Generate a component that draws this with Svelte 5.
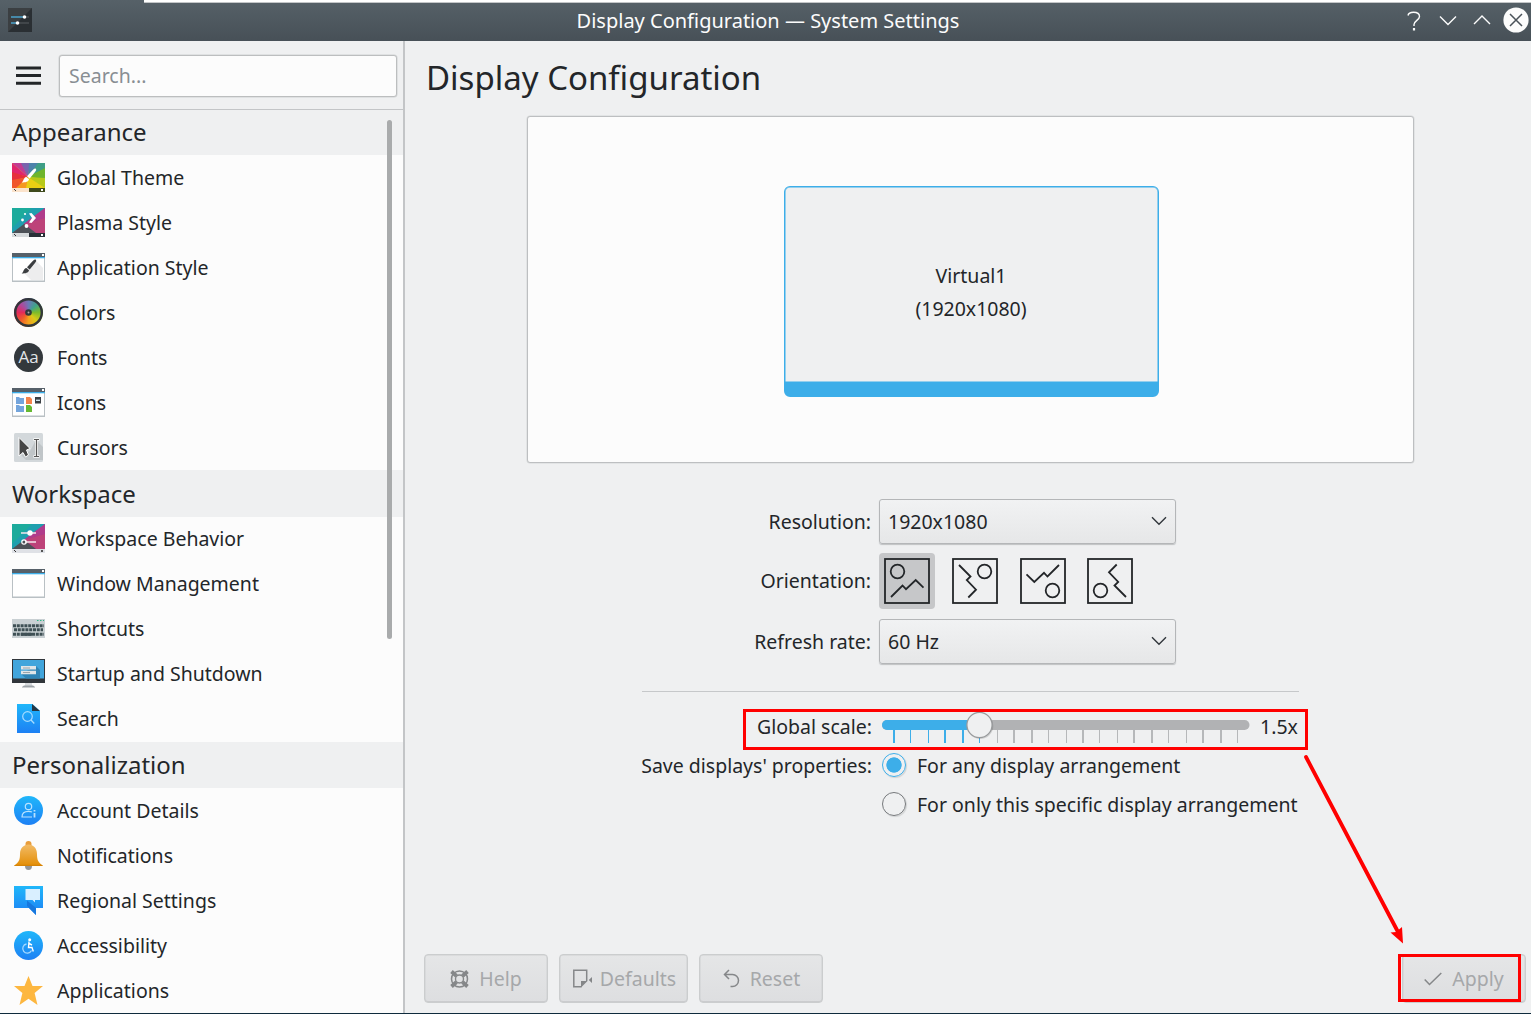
<script>
  const sections = [
    {
      title: 'Appearance',
      height: 'h45',
      items: [
        ['theme', 'Global Theme'],
        ['plasma', 'Plasma Style'],
        ['appstyle', 'Application Style'],
        ['colors', 'Colors'],
        ['fonts', 'Fonts'],
        ['icons', 'Icons'],
        ['cursors', 'Cursors']
      ]
    },
    {
      title: 'Workspace',
      height: 'h47',
      items: [
        ['behavior', 'Workspace Behavior'],
        ['window', 'Window Management'],
        ['keyboard', 'Shortcuts'],
        ['startup', 'Startup and Shutdown'],
        ['search', 'Search']
      ]
    },
    {
      title: 'Personalization',
      height: 'h46',
      items: [
        ['account', 'Account Details'],
        ['bell', 'Notifications'],
        ['regional', 'Regional Settings'],
        ['access', 'Accessibility'],
        ['star', 'Applications']
      ]
    }
  ];

  // Tick marks under the scale slider: [offset, width]
  const ticks = [
    [11, 2], [28, 1], [46, 1], [62, 2], [80, 2], [97, 1], [115, 1],
    [131, 2], [149, 2], [166, 1], [184, 1], [200, 2], [217, 1], [235, 1],
    [251, 2], [269, 2], [286, 1], [304, 1], [320, 2], [338, 2], [355, 1]
  ];

  const orientations = [0, 90, 180, 270];
  let orientation = $state(0);
  let arrangement = $state('any');
</script>

{#snippet chevron()}
  <svg class="chev" width="16" height="10" viewBox="0 0 16 10"><path d="M1 1.2L8 8.2L15 1.2" fill="none" stroke="#31363b" stroke-width="1.4" /></svg>
{/snippet}

{#snippet windowFrame()}
  <rect x="0" y="2" width="33" height="29" fill="#b9c0c4" />
  <rect x="1" y="7" width="31" height="22.5" fill="#fff" />
  <rect x="0" y="2" width="33" height="4" fill="#566069" />
  <rect x="0" y="6" width="33" height="1.3" fill="#3daee9" />
  <rect x="30" y="3" width="2" height="2" fill="#fff" />
{/snippet}

{#snippet brush(color)}
  <path d="M23.6 7.6C24.8 8.6 24 9.8 23 11L17.7 17.4L15 15.2L20.5 9.3C21.6 8 22.7 6.9 23.6 7.6Z" fill={color} />
  <path d="M14.4 15.9L17 18.2C16.6 20.8 13.5 21.4 9.6 21.5C11.8 20.2 11.2 16.4 14.4 15.9Z" fill={color} />
{/snippet}

{#snippet plasmaBack()}
  <rect x="0" y="2" width="33" height="29" fill="#1f9fae" />
  <path d="M0 2H20L0 22Z" fill="#1cab9c" />
  <path d="M33 2V27H23L11.500 18Z" fill="#a8418f" />
  <path d="M33 2V12L12 18Z" fill="#b03c8b" />
  <path d="M12 18L33 12V27H24Z" fill="#bd4379" />
  <path d="M0 27L12 18L24 27Z" fill="#4d5157" />
{/snippet}

{#snippet itemIcon(name)}
  <svg class="item-icon" width="33" height="33" viewBox="0 0 33 33">
    {#if name === 'theme'}
      <rect x="0" y="2" width="33" height="29" fill="#e9cf13" />
      <path d="M16 16L0 2V12Z" fill="#e1256e" />
      <path d="M16 16L0 2H10Z" fill="#c23c93" />
      <path d="M16 16L9 2H18Z" fill="#7a64ad" />
      <path d="M16 16L17 2H27Z" fill="#4d83ab" />
      <path d="M16 16L26 2H33V8Z" fill="#3f9e86" />
      <path d="M16 16L33 7V18Z" fill="#6fb52c" />
      <path d="M16 16L33 17V27Z" fill="#b7c91a" />
      <path d="M16 16L0 11V20Z" fill="#e62f3c" />
      <path d="M16 16L0 19V27H5Z" fill="#f0562b" />
      <path d="M16 16L4 27H14Z" fill="#f59820" />
      <rect x="0" y="27" width="17" height="4" fill="#fbe3cb" />
      <rect x="17" y="27" width="16" height="4" fill="#3e4a1c" />
      <rect x="29" y="28" width="2" height="2" fill="#fff" />
      <path d="M2 28L4 30" stroke="#444" stroke-width="1" />
      {@render brush('#fff')}
    {:else if name === 'plasma'}
      {@render plasmaBack()}
      <rect x="0" y="27" width="17" height="4" fill="#d5d9db" />
      <rect x="17" y="27" width="16" height="4" fill="#292f36" />
      <rect x="29" y="28" width="2" height="2" fill="#fff" />
      <path d="M2 28L4 30" stroke="#333" stroke-width="1" />
      <path d="M17 7.500L19.500 7L24 12L19.500 17L17 16.500L20 12Z" fill="#fff" />
      <circle cx="13" cy="8" r="1.1" fill="#fff" /><circle cx="10.500" cy="14" r="1.400" fill="#fff" /><circle cx="14.500" cy="20" r="1.900" fill="#fff" />
    {:else if name === 'behavior'}
      {@render plasmaBack()}
      <rect x="0" y="27" width="33" height="4" fill="#dfe1e6" />
      <path d="M2 28L4 30" stroke="#333" stroke-width="1" />
      <rect x="29" y="28" width="2" height="2" fill="#555" />
      <path d="M9 11H24M13 20H24" stroke="#f3e6ec" stroke-width="1.300" />
      <circle cx="18" cy="11" r="2.700" fill="#fff" />
      <circle cx="12" cy="20" r="2.200" fill="none" stroke="#fff" stroke-width="1.200" />
    {:else if name === 'appstyle'}
      {@render windowFrame()}
      <path d="M23.500 9L31 17V29H19L11 21Z" fill="#ededee" />
      <g class="shift">{@render brush('#3b3e41')}</g>
    {:else if name === 'window'}
      {@render windowFrame()}
    {:else if name === 'colors'}
      <foreignObject x="2" y="2" width="29" height="29"><div class="wheel"></div></foreignObject>
      <circle cx="16.500" cy="16.500" r="13.300" fill="none" stroke="#33373b" stroke-width="2.400" />
      <circle cx="16.500" cy="16.500" r="3.300" fill="#33373b" />
      <circle cx="16.500" cy="16.500" r="1" fill="#aaa" />
    {:else if name === 'fonts'}
      <circle cx="16.500" cy="16.500" r="14.500" fill="#33383c" />
      <text x="16.500" y="22" text-anchor="middle" class="aa">Aa</text>
    {:else if name === 'icons'}
      {@render windowFrame()}
      <path d="M4 11h3l1 1h4v6H4zM4 19h3l1 1h4v6H4z" fill="#74a5dc" />
      <path d="M14 11h4l2 2v5h-6z" fill="#f5834a" />
      <path d="M14 19h4l2 2v5h-6z" fill="#66b932" />
      <rect x="23" y="11" width="6" height="6.500" fill="#3b4045" />
      <path d="M24 14.300h4" stroke="#d7ecf5" stroke-width="1.300" />
    {:else if name === 'cursors'}
      <rect x="2" y="2" width="29" height="29" rx="1.500" fill="#d3d8db" />
      <path d="M9 24L14 29H31V16L24 9L18 20Z" fill="#c0c5c8" />
      <path d="M7 6.500L18 17.500L14.500 19L16.500 24L13.500 26L11 21.500L7 25Z" fill="#454545" stroke="#fff" stroke-width="1" />
      <path d="M21.500 8.500H27.500M24.500 8.500V25.500M21.500 25.500H27.500" stroke="#fff" stroke-width="2.600" />
      <path d="M22 8.500H27M24.500 8.500V25.500M22 25.500H27" stroke="#555" stroke-width="1.200" />
    {:else if name === 'keyboard'}
      <rect x="0" y="7" width="33" height="19" fill="#c9d0d3" />
      <path d="M25 8.500h1.500M28 8.500h1.500M31 8.500h1" stroke="#2fb587" stroke-width="1.200" />
      <path d="M1 13.700H32M2 17.800H31M1 22.300H32" stroke="#3f5055" stroke-width="3" stroke-dasharray="3 .8" />
      <path d="M9 22.300H20" stroke="#3f5055" stroke-width="3" />
    {:else if name === 'startup'}
      <path d="M13 24h7v5h-7z" fill="#d7dadd" /><path d="M10 30L12 28.500H21L23 30V30.500H10Z" fill="#9da3a8" />
      <rect x="0" y="2" width="33" height="24" fill="#31363b" />
      <rect x="1" y="3" width="31" height="18.500" fill="#41a5dc" />
      <path d="M24 9L28 13V21.500H14L9 17Z" fill="#2f84b6" />
      <path d="M9 9h15v3.600H9zM9 13.700h15v3.600H9z" fill="#dfe5e8" />
      <path d="M11 11h7M11 15.500h7" stroke="#9aa5ab" stroke-width="1" />
    {:else if name === 'search'}
      <path d="M5 2H20.500L28 9V31H5Z" fill="url(#blue)" />
      <path d="M20 2V9H28Z" fill="#273642" />
      <circle cx="15.500" cy="14.500" r="4.800" fill="none" stroke="#a8dcff" stroke-width="1.200" /><path d="M19 18L22.300 21.500" stroke="#a8dcff" stroke-width="1.300" />
    {:else if name === 'account'}
      <circle cx="16.500" cy="16.500" r="14.500" fill="url(#blue)" />
      <g fill="none" stroke="#b9e2ff" stroke-width="1.200">
        <circle cx="16.500" cy="12.500" r="3.200" />
        <path d="M20 23H10C10 18.500 13 17.300 16.500 17.300C18 17.300 19 17.500 20 18" />
        <path d="M22.500 16v1.500M22.500 19v4.500" stroke-width="1.800" />
      </g>
    {:else if name === 'bell'}
      <path d="M13 27A3.500 4 0 0 0 20 27Z" fill="#92969a" />
      <path d="M13.500 5A3 3 0 0 1 19.500 5V7H13.500Z" fill="#e99d3b" />
      <path d="M2 27C7 23 8 21 8 15C8 9 12 5.500 16.500 5.500S25 9 25 15C25 21 26 23 31 27Z" fill="url(#gold)" />
      <path d="M3.500 25.800H29.500L31 27H2Z" fill="#d58307" />
    {:else if name === 'regional'}
      <path d="M2 2H31V24H24V31L17 24H2Z" fill="url(#blue)" />
      <path d="M15 16.500L24 24V31L17 24L15 22Z" fill="#1778de" />
      <path d="M13.500 5H28V16H23V18.500L20.500 16H13.500Z" fill="#d9efff" />
    {:else if name === 'access'}
      <circle cx="16.500" cy="16.500" r="14.500" fill="url(#blue)" />
      <circle cx="17.700" cy="10.700" r="1.500" fill="#fff" />
      <path d="M17 12.500L16.500 18.500H20L21.300 22.500M17 14.500L20 16" fill="none" stroke="#fff" stroke-width="1.400" />
      <path d="M14.500 15A4.600 4.600 0 1 0 19.500 21.500" fill="none" stroke="#a5d8ff" stroke-width="1.300" />
    {:else if name === 'star'}
      <path d="M16.500 2L20.500 12H31L22.600 19L25.500 31L16.500 24.800L7.500 31L10.400 19L2 12H12.500Z" fill="#fdb740" />
    {/if}
  </svg>
{/snippet}

<div class="window">
  <svg class="defs" width="0" height="0">
    <defs>
      <linearGradient id="blue" x1="0" y1="0" x2="0" y2="1"><stop offset="0" stop-color="#20b7fa" /><stop offset="1" stop-color="#1d80f4" /></linearGradient>
      <linearGradient id="gold" x1="0" y1="0" x2="0" y2="1"><stop offset="0" stop-color="#f2bb66" /><stop offset="1" stop-color="#e38d05" /></linearGradient>
    </defs>
  </svg>

  <header class="titlebar">
    <div class="strip"></div>
    <svg class="app-icon" width="24" height="24" viewBox="0 0 24 24">
      <rect width="24" height="24" fill="#2a2f33" />
      <path d="M0 0H24L0 24Z" fill="#3b3f42" />
      <path d="M3 9H16" stroke="#4a9cc4" stroke-width="1.600" /><path d="M18 9H21M10 15H21" stroke="#4a4f53" stroke-width="1.500" /><path d="M3 15H9" stroke="#4a9cc4" stroke-width="1.600" />
      <circle cx="16.500" cy="9" r="1.800" fill="#fff" /><circle cx="9.500" cy="15" r="1.800" fill="#fff" />
    </svg>
    <span class="title">Display Configuration — System Settings</span>
    <svg class="controls" width="131" height="32" viewBox="0 0 131 32">
      <g fill="none" stroke="#fcfcfc" stroke-width="1.400">
        <path d="M8 10.500C8.500 8 10.500 7.300 13.500 7.300C17 7.300 19.500 8.600 19.500 11.600C19.500 15 14 15.800 14 19.500V21" />
        <path d="M14 23V25.500" stroke-width="2.200" />
        <path d="M40 11.500L48 19.500L56 11.500M74 19L82 11L90 19" />
      </g>
      <circle cx="116" cy="15" r="12.600" fill="#fcfcfc" />
      <path d="M110 9L122 21M122 9L110 21" stroke="#4a5259" stroke-width="1.500" />
    </svg>
  </header>

  <div class="body">
    <aside>
      <div class="tools">
        <svg width="25" height="20" viewBox="0 0 25 20"><path d="M0 2H25M0 9.600H25M0 17.200H25" stroke="#232629" stroke-width="3" /></svg>
        <input type="text" placeholder="Search..." />
      </div>
      <nav>
        {#each sections as section}
          <h2 class={section.height}>{section.title}</h2>
          {#each section.items as [icon, label]}
            <div class="item" class:raised={section.title === 'Workspace'}>{@render itemIcon(icon)}<span>{label}</span></div>
          {/each}
        {/each}
        <div class="scrollbar"></div>
      </nav>
    </aside>

    <main>
      <h1>Display Configuration</h1>
      <section class="preview">
        <div class="monitor">
          <div>Virtual1</div>
          <div>(1920x1080)</div>
        </div>
      </section>

      <section class="form">
        <div class="row">
          <span class="label">Resolution:</span>
          <div class="combo"><span>1920x1080</span>{@render chevron()}</div>
        </div>
        <div class="row tall">
          <span class="label">Orientation:</span>
          <div class="orients">
            {#each orientations as angle}
              <button class="orient" class:selected={orientation === angle} aria-label="Rotate {angle}" onclick={() => (orientation = angle)}>
                <svg width="46" height="46" viewBox="0 0 46 46">
                  <g transform="rotate({angle} 23 23)" fill="none" stroke="#232629" stroke-width="1.800">
                    <rect x="1" y="1" width="44" height="44" />
                    <circle cx="13.500" cy="13.500" r="6.800" />
                    <path d="M7 39L18.500 27.500L22 31.200L31.700 22L39.500 29.700" />
                  </g>
                </svg>
              </button>
            {/each}
          </div>
        </div>
        <div class="row">
          <span class="label">Refresh rate:</span>
          <div class="combo"><span>60 Hz</span>{@render chevron()}</div>
        </div>
      </section>

      <hr />

      <section class="form second">
        <div class="row">
          <span class="label">Global scale:</span>
          <div class="scale">
            <svg width="368" height="36" viewBox="0 0 368 36">
              <rect x="0" y="11" width="367.500" height="10" rx="5" fill="#b1b2b4" />
              <rect x="0" y="11" width="98" height="10" rx="5" fill="#3daee9" />
              {#each ticks as [x, w], i}
                <rect {x} y="21" width={w} height="13" fill={i < 6 ? '#3daee9' : '#b6b8ba'} />
              {/each}
              <circle cx="98.300" cy="17" r="13" fill="#000" opacity=".13" />
              <circle cx="97.500" cy="16" r="12.600" fill="#eff0f1" stroke="#989a9c" stroke-width="1.300" />
            </svg>
            <span>1.5x</span>
          </div>
        </div>
        <div class="row">
          <span class="label">Save displays' properties:</span>
          <label class="choice"><input type="radio" value="any" bind:group={arrangement} /><i></i>For any display arrangement</label>
        </div>
        <div class="row">
          <span class="label"></span>
          <label class="choice"><input type="radio" value="specific" bind:group={arrangement} /><i></i>For only this specific display arrangement</label>
        </div>
      </section>

      <footer>
        <button class="btn help" disabled>
          <svg width="19" height="18" viewBox="0 0 19 18"><g fill="none" stroke="#858789"><circle cx="9.500" cy="9" r="8" stroke-width="1.500" /><circle cx="9.500" cy="9" r="4" stroke-width="1.400" /><path d="M1.500 1.500L6.500 6M17.500 1.500L12.500 6M1.500 16.500L6.500 12M17.500 16.500L12.500 12" stroke-width="3.800" /></g></svg>
          Help
        </button>
        <button class="btn defaults" disabled>
          <svg width="19" height="19" viewBox="0 0 19 19"><path d="M13.700 12V1.200H.8V17.800H8.500" fill="none" stroke="#858789" stroke-width="1.500" /><path d="M8 18.500V12H14.500ZM19 8V14L15.800 11Z" fill="#858789" /></svg>
          Defaults
        </button>
        <button class="btn reset" disabled>
          <svg width="17" height="19" viewBox="0 0 17 19"><path d="M6 1L1.500 5.500L6 10M1.500 5.500H9.500A5.800 5.800 0 0 1 9.500 17.500H7.500" fill="none" stroke="#858789" stroke-width="1.500" /></svg>
          Reset
        </button>
        <button class="btn apply" disabled>
          <svg width="18" height="14" viewBox="0 0 18 14"><path d="M.7 7.500L5.500 12.500L17.300 1" fill="none" stroke="#858789" stroke-width="1.500" /></svg>
          Apply
        </button>
      </footer>
    </main>
  </div>

  <!-- Callouts laid over the window -->
  <div class="mark mark-scale"></div>
  <div class="mark mark-apply"></div>
  <svg class="arrow" width="110" height="200" viewBox="0 0 110 200">
    <path d="M6 7L97.500 181" stroke="#f00" stroke-width="3.800" stroke-linecap="round" />
    <path d="M103 193.500L90.500 182.500L96 182L102 177Z" fill="#f00" />
  </svg>
</div>

<style>
  :global(body) {
    margin: 0;
  }
  .window {
    position: relative;
    display: flex;
    flex-direction: column;
    box-sizing: border-box;
    width: 1531px;
    height: 1014px;
    overflow: hidden;
    background: #eff0f1;
    border-bottom: 1px solid #0f2b3d;
    color: #232629;
    font: 19.5px/30px 'Noto Sans', sans-serif;
  }
  .defs {
    position: absolute;
  }
  .titlebar {
    position: relative;
    display: grid;
    grid-template-columns: 131px 1fr 131px;
    align-items: center;
    flex: none;
    height: 41px;
    background: linear-gradient(#566168, #475057);
    color: #fcfcfc;
    font-size: 20px;
  }
  .strip {
    position: absolute;
    left: 144px;
    right: 0;
    top: 0;
    height: 2px;
    background: #fff;
    border-bottom: 1px solid #c3c6c8;
  }
  .app-icon {
    margin-left: 8px;
    margin-top: -1px;
  }
  .title {
    text-align: center;
    padding-left: 5px;
  }
  .controls {
    margin-top: 1px;
  }
  .body {
    display: flex;
    flex: 1;
    min-height: 0;
  }
  aside {
    width: 403px;
    flex: none;
    border-right: 2px solid #c3c5c7;
    background: #fcfcfc;
  }
  .tools {
    display: flex;
    align-items: center;
    gap: 18px;
    height: 68px;
    padding-left: 16px;
    border-bottom: 1px solid #c3c5c7;
    background: #eff0f1;
  }
  .tools svg {
    margin-top: 2px;
  }
  .tools input {
    box-sizing: border-box;
    width: 338px;
    height: 42px;
    margin-top: 1px;
    padding: 0 9px;
    border: 1px solid #bcbebf;
    border-radius: 3px;
    outline: none;
    box-shadow: 0 0 0 0.5px #d0d2d3;
    background: #fcfcfc;
    font: inherit;
  }
  .tools input::placeholder {
    color: #888e93;
    opacity: 1;
  }
  nav {
    position: relative;
  }
  h2 {
    margin: 0;
    padding-left: 12px;
    background: #eff0f1;
    font-size: 24px;
    font-weight: 400;
  }
  .h45 {
    height: 45px;
    line-height: 44px;
  }
  .h46 {
    height: 46px;
    line-height: 46px;
  }
  .h47 {
    height: 47px;
    line-height: 48px;
  }
  .item {
    display: flex;
    align-items: center;
    gap: 12px;
    box-sizing: border-box;
    height: 45px;
    padding-left: 12px;
  }
  .item.raised {
    padding-bottom: 2px;
  }
  .item-icon {
    flex: none;
  }
  .shift {
    transform: translateY(1px);
  }
  .wheel {
    width: 29px;
    height: 29px;
    border-radius: 50%;
    background: conic-gradient(#6b79b8, #3fa38b, #7dbb2a, #d8ca18, #f5a01d, #ef5a2c, #e52a59, #b14699, #6b79b8);
  }
  .aa {
    fill: #e2e6e8;
    font: 400 17px 'Open Sans', 'Noto Sans', sans-serif;
  }
  .scrollbar {
    position: absolute;
    top: 10px;
    right: 11px;
    width: 5px;
    height: 519px;
    border-radius: 3px;
    background: #a9abac;
  }
  main {
    display: flex;
    flex: 1;
    flex-direction: column;
    min-width: 0;
  }
  h1 {
    height: 75px;
    margin: 0;
    padding-left: 21px;
    font-size: 33px;
    font-weight: 400;
    line-height: 73px;
  }
  .preview {
    display: flex;
    justify-content: center;
    box-sizing: border-box;
    width: 887px;
    height: 347px;
    margin-left: 122px;
    padding: 69px 0 0 1px;
    border: 1px solid #bdbfc1;
    border-radius: 3px;
    box-shadow: 0 0 0 0.5px #d6d8d9;
    background: #fcfcfc;
  }
  .monitor {
    box-sizing: border-box;
    width: 375px;
    height: 211px;
    padding-top: 72px;
    border: 1px solid #3daee9;
    border-bottom-width: 15px;
    border-radius: 6px;
    box-shadow: inset 0 0 0 0.5px #3daee9;
    background: #eff0f1;
    text-align: center;
    line-height: 33px;
  }
  .form {
    margin-top: 36px;
  }
  .row {
    display: grid;
    grid-template-columns: 466px auto;
    justify-content: start;
    align-items: center;
    column-gap: 8px;
    height: 45px;
  }
  .row.tall {
    box-sizing: border-box;
    height: 75px;
    padding-bottom: 2px;
  }
  .label {
    text-align: right;
  }
  .combo {
    display: flex;
    align-items: center;
    justify-content: space-between;
    box-sizing: border-box;
    width: 297px;
    height: 45px;
    padding: 0 8px;
    border: 1px solid #b4b6b8;
    border-radius: 3px;
    box-shadow: 0 1px 1px #bfc1c3;
    background: linear-gradient(#f1f2f3, #e6e7e8);
  }
  .chev {
    margin-bottom: 2px;
  }
  .orients {
    display: flex;
    gap: 11.800px;
  }
  .orient {
    display: grid;
    place-items: center;
    width: 56px;
    height: 56px;
    padding: 0;
    border: 0;
    border-radius: 4px;
    background: transparent;
  }
  .orient.selected {
    background: #c6c7c9;
  }
  hr {
    width: 657px;
    height: 1px;
    margin: 27px 0 0 237px;
    border: 0;
    background: #c6c8ca;
  }
  .second {
    margin-top: 15px;
  }
  .second .row {
    grid-template-columns: 467px auto;
    column-gap: 10px;
    height: 39px;
  }
  .scale {
    display: flex;
    align-items: center;
    gap: 10px;
  }
  .choice {
    display: flex;
    align-items: center;
    gap: 11px;
  }
  .choice input {
    position: absolute;
    opacity: 0;
  }
  .choice i {
    box-sizing: border-box;
    width: 24px;
    height: 24px;
    margin-bottom: 2px;
    border: 1.500px solid #76797c;
    border-radius: 50%;
    box-shadow: 1px 1px 1px #d0d2d3;
  }
  .choice input:checked + i {
    border-color: #3daee9;
    background: radial-gradient(circle, #3daee9 7.300px, transparent 8px);
  }
  footer {
    display: flex;
    gap: 11px;
    margin-top: auto;
    padding: 0 5px 10px 19px;
  }
  .btn {
    display: flex;
    align-items: center;
    justify-content: center;
    gap: 10px;
    box-sizing: border-box;
    width: 124px;
    height: 49px;
    padding: 0;
    border: 1px solid #cbcdce;
    border-radius: 4px;
    box-shadow: inset 0 0 0 0.5px #cfd0d2, inset 0 -1px 0 #c6c8ca;
    background: linear-gradient(#e5e6e7, #dddee0);
    color: #a6a8aa;
    font: inherit;
  }
  .defaults {
    width: 129px;
    gap: 8px;
    padding-left: 2px;
  }
  .reset {
    padding-left: 1px;
  }
  .apply {
    margin-left: auto;
  }
  .mark {
    position: absolute;
    box-sizing: border-box;
    border: 3px solid #f00;
  }
  .mark-scale {
    left: 743px;
    top: 709px;
    width: 565px;
    height: 41px;
  }
  .mark-apply {
    left: 1398px;
    top: 954px;
    width: 123px;
    height: 48px;
  }
  .arrow {
    position: absolute;
    left: 1300px;
    top: 750px;
  }
</style>
